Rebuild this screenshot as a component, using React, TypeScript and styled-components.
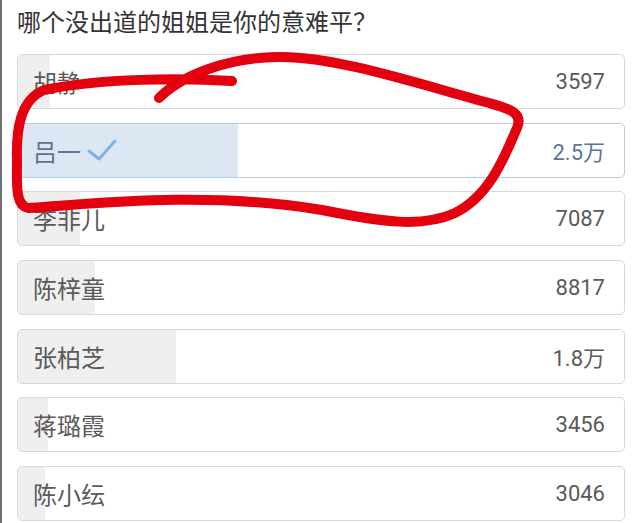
import React from "react";
import styled, { createGlobalStyle } from "styled-components";

const Global = createGlobalStyle`
  html, body { margin: 0; padding: 0; background: #ffffff; }
  body { font-family: "Roboto", "Noto Sans CJK SC", sans-serif; }
`;

const Page = styled.div`
  position: relative;
  width: 641px;
  height: 523px;
  overflow: hidden;
  box-sizing: border-box;
  border-left: 2px solid #6f6f6f;
  padding: 6px 16px 0 15px;
  background: #fff;
`;

const Title = styled.h1`
  margin: 0 0 14px 0;
  font-size: 24px;
  line-height: 34px;
  font-weight: 400;
  color: #333;
  font-family: "Roboto", "Noto Sans CJK SC", sans-serif;
`;

const List = styled.div`
  display: flex;
  flex-direction: column;
  gap: 13.7px;
`;

const Row = styled.div<{ $selected?: boolean }>`
  position: relative;
  height: 55px;
  box-sizing: border-box;
  border: 1px solid ${(p) => (p.$selected ? "#b7cde2" : "#d5d9de")};
  border-radius: 5px;
  overflow: hidden;
  background: #fff;
  display: flex;
  align-items: center;
  justify-content: space-between;
  padding: 0 19px 0 15px;
`;

const Fill = styled.div<{ $selected?: boolean }>`
  position: absolute;
  left: 0;
  top: 0;
  bottom: 0;
  background: ${(p) => (p.$selected ? "#dce7f3" : "#efefef")};
`;

const Label = styled.span<{ $selected?: boolean }>`
  position: relative;
  display: flex;
  align-items: center;
  gap: 6px;
  font-size: 24px;
  color: ${(p) => (p.$selected ? "#5b7593" : "#5a5a5a")};
`;

const Count = styled.span<{ $selected?: boolean }>`
  position: relative;
  font-size: 22px;
  color: ${(p) => (p.$selected ? "#5b7593" : "#5a5a5a")};
`;

const Scribble = styled.svg`
  position: absolute;
  left: 0;
  top: 0;
  width: 641px;
  height: 523px;
  pointer-events: none;
`;

const options = [
  { name: "胡静", count: "3597", votes: 3597 },
  { name: "吕一", count: "2.5万", votes: 25000, selected: true },
  { name: "李非儿", count: "7087", votes: 7087 },
  { name: "陈梓童", count: "8817", votes: 8817 },
  { name: "张柏芝", count: "1.8万", votes: 18000 },
  { name: "蒋璐霞", count: "3456", votes: 3456 },
  { name: "陈小纭", count: "3046", votes: 3046 },
];

const total = options.reduce((s, o) => s + o.votes, 0);

const Check = () => (
  <svg width="30" height="22" viewBox="0 0 30 22">
    <path d="M2 12 L12 20 L28 2" fill="none" stroke="#7db4e6" strokeWidth="3" strokeLinecap="round" strokeLinejoin="round" />
  </svg>
);

export default function App() {
  return (
    <>
      <Global />
      <Page>
        <Title>哪个没出道的姐姐是你的意难平？</Title>
        <List>
          {options.map((o) => (
            <Row key={o.name} $selected={o.selected}>
              <Fill $selected={o.selected} style={{ width: `${(o.votes / total) * 100}%` }} />
              <Label $selected={o.selected}>
                {o.name}
                {o.selected && <Check />}
              </Label>
              <Count $selected={o.selected}>{o.count}</Count>
            </Row>
          ))}
        </List>
        <Scribble viewBox="0 0 641 523">
          <path
            d="M 230 81 C 180 78, 100 78, 42 90 C 18 100, 14 130, 15 160 C 15 185, 13 205, 26 208 C 80 205, 200 190, 320 210 C 380 222, 420 228, 453 213 C 490 195, 505 150, 515 128 C 522 112, 505 108, 487 103 C 420 85, 330 55, 275 57 C 225 58, 180 75, 157 98"
            fill="none"
            stroke="#e3000f"
            strokeWidth="10"
            strokeLinecap="round"
            strokeLinejoin="round"
          />
        </Scribble>
      </Page>
    </>
  );
}
